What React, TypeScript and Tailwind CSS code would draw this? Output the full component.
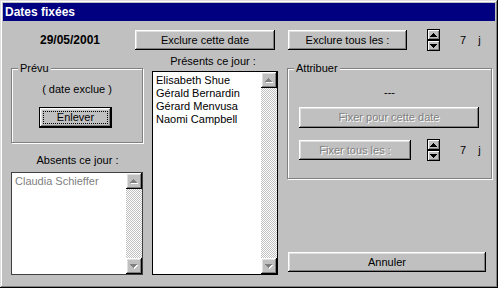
import React from 'react';

const raised =
  'bg-[#c0c0c0] shadow-[inset_-1px_-1px_#000,inset_1px_1px_#fff,inset_-2px_-2px_#808080,inset_2px_2px_#dfdfdf]';
const disabledText = 'text-[#808080] [text-shadow:1px_1px_0_#fff]';
const dither =
  'bg-[repeating-conic-gradient(#c0c0c0_0%_25%,#ffffff_0%_50%)] bg-[length:2px_2px]';

const Arrow: React.FC<{ up?: boolean; color?: string }> = ({ up, color = '#000' }) => (
  <svg width="7" height="4" viewBox="0 0 7 4" shapeRendering="crispEdges">
    {up ? (
      <path d="M3 0h1v1h1v1h1v1h1v1H0V3h1V2h1V1h1z" fill={color} />
    ) : (
      <path d="M0 0h7v1H6v1H5v1H4v1H3V3H2V2H1V1H0z" fill={color} />
    )}
  </svg>
);

// greyed arrow with the white emboss under it
const DimArrow: React.FC<{ up?: boolean }> = ({ up }) => (
  <div className="relative w-[8px] h-[5px]">
    <div className="absolute left-[1px] top-[1px] flex">
      <Arrow up={up} color="#fff" />
    </div>
    <div className="absolute left-0 top-0 flex">
      <Arrow up={up} color="#808080" />
    </div>
  </div>
);

const Button: React.FC<{ label: string; w: string; h?: string; disabled?: boolean; className?: string }> = ({
  label,
  w,
  h = 'h-[20px]',
  disabled,
  className = '',
}) => (
  <div className={`${raised} ${w} ${h} ${className} flex items-center justify-center shrink-0`}>
    <span className={disabled ? disabledText : ''}>{label}</span>
  </div>
);

const SpinBtn: React.FC<{ up?: boolean }> = ({ up }) => (
  <div className="h-[11px] border border-black bg-[#c0c0c0] shadow-[inset_1px_1px_#fff,inset_-1px_-1px_#808080] flex items-center justify-center">
    <Arrow up={up} />
  </div>
);

const Spinner: React.FC<{ className?: string }> = ({ className = '' }) => (
  <div className={`flex flex-col w-[13px] shrink-0 ${className}`}>
    <SpinBtn up />
    <SpinBtn />
  </div>
);

const ScrollBtn: React.FC<{ up?: boolean }> = ({ up }) => (
  <div className={`${raised} h-[16px] flex items-center justify-center`}>
    <DimArrow up={up} />
  </div>
);

const ListBox: React.FC<{ items: string[]; h: string; dim?: boolean; border: string }> = ({
  items,
  h,
  dim,
  border,
}) => (
  <div className={`flex ${h} border ${border} bg-white`}>
    <div className="flex-1 pt-[2px] pl-[3px] leading-[13px]">
      {items.map((it) => (
        <div key={it} className={dim ? 'text-[#808080]' : ''}>
          {it}
        </div>
      ))}
    </div>
    <div className="w-[16px] flex flex-col">
      <ScrollBtn up />
      <div className={`flex-1 ${dither}`} />
      <ScrollBtn />
    </div>
  </div>
);

const Group: React.FC<{ title: string; className?: string; children: React.ReactNode }> = ({
  title,
  className = '',
  children,
}) => (
  <div className={`relative border border-[#808080] shadow-[inset_1px_1px_#fff,1px_1px_#fff] ${className}`}>
    <span className="absolute -top-[7px] left-[6px] px-[2px] bg-[#c0c0c0] leading-[13px]">{title}</span>
    {children}
  </div>
);

export default function App() {
  return (
    <div
      className="w-[498px] h-[288px] bg-[#c0c0c0] text-black text-[11px] leading-[13px] flex flex-col shadow-[inset_-1px_-1px_#000,inset_1px_1px_#dfdfdf,inset_-2px_-2px_#808080,inset_2px_2px_#fff]"
      style={{ fontFamily: '"Liberation Sans", Arial, sans-serif' }}
    >
      {/* Title bar */}
      <div className="mx-[3px] mt-[3px] h-[18px] bg-[#000080] text-white font-bold text-[12px] pl-[2px] flex items-center">
        Dates fixées
      </div>

      {/* Top row */}
      <div className="flex items-center h-[22px] mt-[8px]">
        <div className="ml-[11px] w-[118px] text-center font-bold text-[12px]">29/05/2001</div>
        <Button label="Exclure cette date" w="w-[140px]" className="ml-[6px]" />
        <Button label="Exclure tous les :" w="w-[119px]" className="ml-[13px]" />
        <Spinner className="ml-[20px]" />
        <span className="ml-[20px]">7</span>
        <span className="ml-[12px]">j</span>
      </div>

      {/* Main area */}
      <div className="flex items-start mt-[4px]">
        {/* Left column */}
        <div className="ml-[11px] w-[133px] flex flex-col">
          <Group title="Prévu" className="mt-[13px] w-[132px] h-[75px]">
            <div className="mt-[14px] text-center">( date exclue )</div>
            <div className="ml-[27px] mt-[11px] w-[73px] h-[21px] border border-black">
              <div className={`${raised} h-full p-[3px]`}>
                <div className="h-full border border-dotted border-black flex items-center justify-center">
                  Enlever
                </div>
              </div>
            </div>
          </Group>
          <div className="mt-[11px] text-center">Absents ce jour :</div>
          <div className="mt-[5px] w-[132px]">
            <ListBox items={['Claudia Schieffer']} h="h-[103px]" dim border="border-[#404040]" />
          </div>
        </div>

        {/* Middle column */}
        <div className="ml-[8px] w-[126px] flex flex-col">
          <div className="text-center pr-[4px]">Présents ce jour :</div>
          <div className="mt-[3px]">
            <ListBox
              items={['Elisabeth Shue', 'Gérald Bernardin', 'Gérard Menvusa', 'Naomi Campbell']}
              h="h-[204px]"
              border="border-black"
            />
          </div>
        </div>

        {/* Right column */}
        <div className="ml-[9px] w-[205px] flex flex-col">
          <Group title="Attribuer" className="mt-[13px] w-[205px] h-[111px]">
            <div className="mt-[17px] text-center">---</div>
            <Button label="Fixer pour cette date" w="w-[180px]" h="h-[21px]" disabled className="ml-[11px] mt-[8px]" />
            <div className="flex items-center h-[22px] mt-[11px]">
              <Button label="Fixer tous les :" w="w-[112px]" disabled className="ml-[11px]" />
              <Spinner className="ml-[16px]" />
              <span className="ml-[20px]">7</span>
              <span className="ml-[12px]">j</span>
            </div>
          </Group>
          <Button label="Annuler" w="w-[198px]" className="ml-[1px] mt-[73px]" />
        </div>
      </div>
    </div>
  );
}
